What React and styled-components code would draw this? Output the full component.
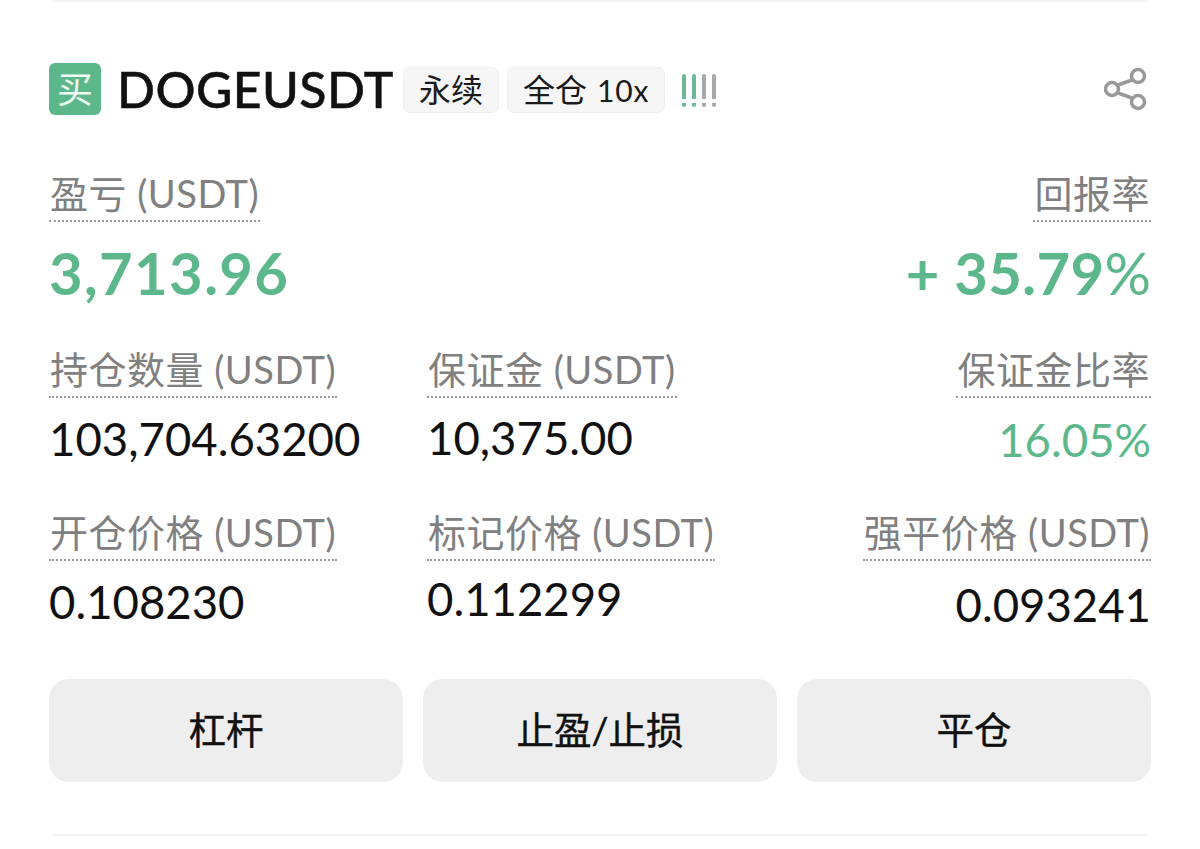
import styled, { createGlobalStyle } from "styled-components";

const GlobalStyle = createGlobalStyle`
  html, body {
    margin: 0;
    padding: 0;
    background: #ffffff;
  }
  body {
    font-family: Lato, "Noto Sans CJK SC", sans-serif;
  }
`;

const GREEN = "#5cb88a";

const Page = styled.div`
  width: 1200px;
  height: 849px;
  box-sizing: border-box;
  padding: 0 49px;
  overflow: hidden;
  display: flex;
  flex-direction: column;
`;

const Rule = styled.div`
  height: 2px;
  margin: 0 3px;
  background: #f4f4f4;
  flex: none;
`;

const Header = styled.div`
  display: flex;
  align-items: center;
  height: 52px;
  margin-top: 61px;
`;

const SideBadge = styled.div`
  width: 52px;
  height: 52px;
  border-radius: 6px;
  background: ${GREEN};
  color: #eefaf3;
  font-size: 36px;
  line-height: 52px;
  text-align: center;
  flex: none;
`;

const Symbol = styled.div`
  font-size: 50px;
  font-weight: 500;
  color: #111;
  margin-left: 16px;
  line-height: 52px;
  letter-spacing: 0.4px;
  -webkit-text-stroke: 0.5px #111;
`;

const Tag = styled.div`
  height: 46px;
  box-sizing: border-box;
  padding: 0 15px;
  margin: 2px 0 0 ${(p) => p.$gap}px;
  background: #f6f6f6;
  border: 1px solid #efefef;
  border-radius: 7px;
  font-size: 32px;
  line-height: 44px;
  color: #1a1a1a;
  white-space: nowrap;
`;

const Leverage = styled.span`
  font-size: 30px;
  margin-left: 2px;
  letter-spacing: 0.8px;
`;

const Bars = styled.div`
  display: flex;
  gap: 6px;
  margin: 2px 0 0 17px;
`;

const Bar = styled.span`
  width: 4px;
  height: 33px;
  background: linear-gradient(
    to bottom,
    ${(p) => p.$c} 0 25px,
    transparent 25px 29px,
    ${(p) => p.$c} 29px
  );
  border-radius: 2px;
`;

const Share = styled.svg`
  margin: 0 3px 0 auto;
  width: 44px;
  height: 44px;
  flex: none;
`;

const Row = styled.div`
  display: grid;
  grid-template-columns: 378px 1fr auto;
  margin-top: ${(p) => p.$top}px;
`;

const Cell = styled.div`
  display: flex;
  flex-direction: column;
  align-items: ${(p) => (p.$right ? "flex-end" : "flex-start")};
`;

const Label = styled.div`
  font-size: 38px;
  line-height: 47px;
  letter-spacing: 0.5px;
  color: #808080;
  padding: 0 1px 3px 1px;
  border-bottom: 2px dotted #9a9a9a;
  white-space: nowrap;
`;

const Big = styled.div`
  font-size: 58px;
  font-weight: 700;
  line-height: 64px;
  letter-spacing: ${(p) => p.$spacing}px;
  color: ${GREEN};
  margin-top: 19px;
  white-space: nowrap;
`;

const Percent = styled.span`
  font-weight: 400;
  letter-spacing: 0;
`;

const Value = styled.div`
  font-size: 45.5px;
  line-height: 52px;
  color: ${(p) => (p.$green ? GREEN : "#111")};
  margin-top: ${(p) => p.$top}px;
  white-space: nowrap;
`;

const Actions = styled.div`
  display: grid;
  grid-template-columns: repeat(3, 354px);
  gap: 20px;
  margin-top: 48px;
`;

const Action = styled.button`
  height: 103px;
  padding: 0 0 7px;
  border: 0;
  border-radius: 20px;
  background: #eeeeee;
  color: #111;
  font-family: inherit;
  font-size: 37.5px;
  font-weight: 400;
  -webkit-text-stroke: 0.4px #111;
`;

const BottomRule = styled(Rule)`
  margin-top: 52px;
`;

export default function App() {
  return (
    <>
      <GlobalStyle />
      <Page>
        <Rule />
        <Header>
          <SideBadge>买</SideBadge>
          <Symbol>DOGEUSDT</Symbol>
          <Tag $gap={9}>永续</Tag>
          <Tag $gap={8}>全仓 <Leverage>10x</Leverage></Tag>
          <Bars>
            <Bar $c="#6dbb96" />
            <Bar $c="#6dbb96" />
            <Bar $c="#a8a8a8" />
            <Bar $c="#a8a8a8" />
          </Bars>
          <Share viewBox="0 0 44 44" fill="none" stroke="#999999" strokeWidth="3.5">
            <circle cx="8" cy="22" r="6.5" />
            <circle cx="34" cy="9" r="6.5" />
            <circle cx="34" cy="35" r="6.5" />
            <path d="M14 18L28 13M14 26L28 31" />
          </Share>
        </Header>
        <Row $top={55}>
          <Cell>
            <Label>盈亏 (USDT)</Label>
            <Big $spacing={1.4}>3,713.96</Big>
          </Cell>
          <Cell />
          <Cell $right>
            <Label>回报率</Label>
            <Big $spacing={0.4}>+ 35.79<Percent>%</Percent></Big>
          </Cell>
        </Row>
        <Row $top={41}>
          <Cell>
            <Label>持仓数量 (USDT)</Label>
            <Value $top={15}>103,704.63200</Value>
          </Cell>
          <Cell>
            <Label>保证金 (USDT)</Label>
            <Value $top={14}>10,375.00</Value>
          </Cell>
          <Cell $right>
            <Label>保证金比率</Label>
            <Value $top={16} $green>16.05%</Value>
          </Cell>
        </Row>
        <Row $top={43}>
          <Cell>
            <Label>开仓价格 (USDT)</Label>
            <Value $top={15}>0.108230</Value>
          </Cell>
          <Cell>
            <Label>标记价格 (USDT)</Label>
            <Value $top={12}>0.112299</Value>
          </Cell>
          <Cell $right>
            <Label>强平价格 (USDT)</Label>
            <Value $top={18}>0.093241</Value>
          </Cell>
        </Row>
        <Actions>
          <Action>杠杆</Action>
          <Action>止盈/止损</Action>
          <Action>平仓</Action>
        </Actions>
        <BottomRule />
      </Page>
    </>
  );
}
